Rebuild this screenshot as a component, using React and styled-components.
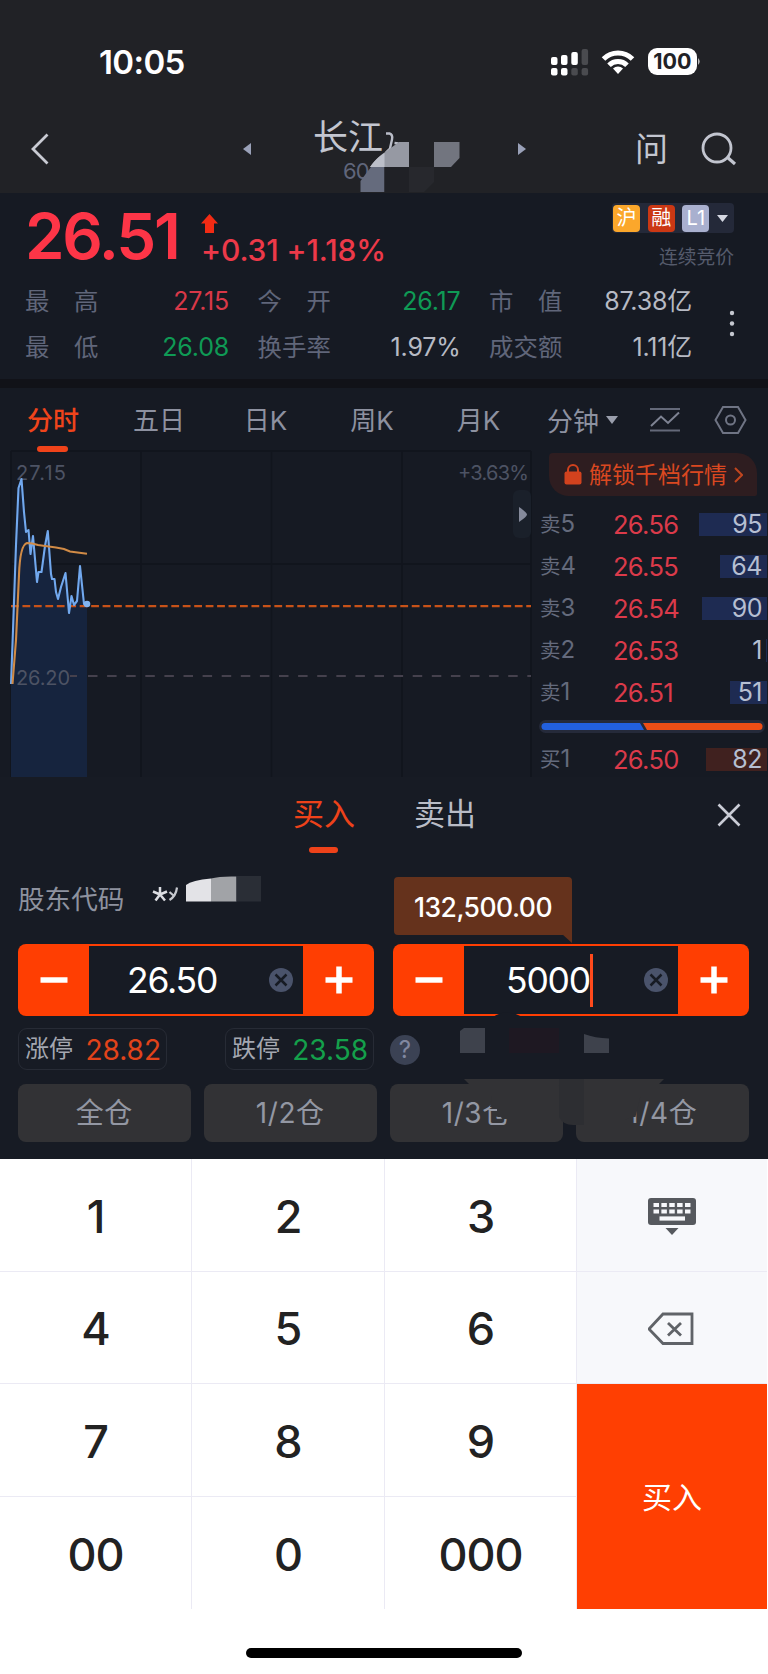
import { useState } from "react";
import styled, { createGlobalStyle } from "styled-components";

const stats = [
  { label: ["最", "高"], value: "27.15", color: "#d93848" },
  { label: ["今", "开"], value: "26.17", color: "#0f9a55" },
  { label: ["市", "值"], value: "87.38亿" },
  { label: ["最", "低"], value: "26.08", color: "#0f9a55" },
  { label: ["换", "手", "率"], value: "1.97%" },
  { label: ["成", "交", "额"], value: "1.11亿" },
];

const asks = [
  { side: "卖", level: 5, price: "26.56", volume: 95, bar: 68 },
  { side: "卖", level: 4, price: "26.55", volume: 64, bar: 47 },
  { side: "卖", level: 3, price: "26.54", volume: 90, bar: 65 },
  { side: "卖", level: 2, price: "26.53", volume: 1, bar: 1 },
  { side: "卖", level: 1, price: "26.51", volume: 51, bar: 37 },
];

const priceLine =
  "11,684 13,630 16,545 18.5,488 21.5,479 24,512 26,532 28.5,530 30.5,554 33,536 37,582 38.5,572 41.5,572 45,546 47.8,531 51,574 52,579 54.5,579 56,592 58,599 61,587 65.5,573 69,613 71.5,596 74,605 77,601 80,566 84,604 87,604";

const keys = ["1", "2", "3", "4", "5", "6", "7", "8", "9", "00", "0", "000"];

const StatusIcons = () => (
  <svg width="152" height="30" viewBox="550 47 152 30">
    <g fill="#fff">
      <rect x="551" y="57" width="6.5" height="8" rx="2" />
      <rect x="561" y="55" width="6.5" height="10" rx="2" />
      <rect x="571.3" y="52" width="6.5" height="13" rx="2" />
      <rect x="551" y="68" width="6.5" height="7.5" rx="2" />
      <rect x="561" y="68" width="6.5" height="7.5" rx="2" />
    </g>
    <g fill="#4a4b4f">
      <rect x="581.6" y="49" width="6.5" height="16" rx="2" />
      <rect x="571.3" y="68" width="6.5" height="7.5" rx="2" />
      <rect x="581.6" y="68" width="6.5" height="7.5" rx="2" />
    </g>
    <g fill="none" stroke="#fff" strokeWidth="5">
      <path d="M603.5 59a20.5 20.5 0 0 1 29 0" />
      <path d="M609 65.3a12.8 12.8 0 0 1 18 0" />
    </g>
    <path d="M618 74l-5-5.5a7.2 7.2 0 0 1 10 0z" fill="#fff" />
    <rect x="648" y="48" width="49" height="27" rx="9" fill="#fff" />
    <path d="M698.3 58q2.4 3.5 0 7z" fill="#fff" />
    <text x="672.3" y="69.3" textAnchor="middle" fontFamily="Inter, sans-serif" fontSize="21.5" fontWeight="700" fill="#212226">
      100
    </text>
  </svg>
);

const Chart = () => (
  <ChartSvg width="532" height="331" viewBox="0 446 532 331">
    <path d="M11 451H531M11 564H531M11 451V778M141 451V778M271.5 451V778M402 451V778M531 451V778" stroke="#11151d" strokeWidth="1.5" fill="none" />
    <text x="16" y="479.5" textLength="50">
      27.15
    </text>
    <text x="529" y="479.5" textAnchor="end" textLength="71">
      +3.63%
    </text>
    <polygon points={`${priceLine} 87,778 11,778`} fill="#16243e" />
    <text x="16" y="684.5" textLength="54">
      26.20
    </text>
    <path d="M70 676h7M88 676H531" stroke="#45414d" strokeWidth="2" strokeDasharray="9.5 9.6" />
    <path d="M11 606.2H531" stroke="#c75218" strokeWidth="2.3" strokeDasharray="7.8 3.65" />
    <polyline points={priceLine} fill="none" stroke="#71a8ee" strokeWidth="2.1" strokeLinejoin="round" />
    <circle cx="87" cy="604" r="3.3" fill="#83b4f1" />
    <path d="M12.5 684L16 640 19 575Q20 545 27 543Q32 543 38 545L56 547.5 64 549 70 551.5 87 553.8" fill="none" stroke="#d18b46" strokeWidth="2.1" />
    <rect x="513" y="490" width="18" height="48" rx="6" fill="#1a202a" />
    <path d="M519 507v15q8-5.5 8-7.5t-8-7.5z" fill="#858a9b" />
  </ChartSvg>
);

const Stepper = ({ value, focused }) => (
  <StepperBox>
    <StepButton>
      <svg width="28" height="28" viewBox="0 0 28 28">
        <path d="M0.5 14H27.5" stroke="#fff" strokeWidth="5.5" />
      </svg>
    </StepButton>
    <StepInput>
      <StepValue $focused={focused}>{value}</StepValue>
      <ClearIcon width="24" height="24" viewBox="0 0 24 24">
        <circle cx="12" cy="12" r="12" fill="#4a536b" />
        <path d="M6.500 6.500l11 11M17.500 6.500l-11 11" stroke="#171b24" strokeWidth="2.5" />
      </ClearIcon>
    </StepInput>
    <StepButton>
      <svg width="28" height="28" viewBox="0 0 28 28">
        <path d="M0.5 14H27.5M14 0.5V27.5" stroke="#fff" strokeWidth="5.5" />
      </svg>
    </StepButton>
  </StepperBox>
);

const BookLine = ({ row, buy }) => (
  <BookRow>
    <Level>
      {row.side}
      <b>{row.level}</b>
    </Level>
    <BookPrice>{row.price}</BookPrice>
    <VolumeCell>
      <VolumeBar $buy={buy} style={{ width: row.bar }} />
      <span>{row.volume}</span>
    </VolumeCell>
  </BookRow>
);

const App = () => {
  const [shares, setShares] = useState("5000");

  return (
    <Page>
      <GlobalStyle />
      <StatusBar>
        <Clock>10:05</Clock>
        <StatusIcons />
      </StatusBar>

      <Header>
        <svg width="20" height="32" viewBox="0 0 20 32">
          <path d="M16.5 1.5L2 16l14.500 14.500" fill="none" stroke="#c9cbd3" strokeWidth="2.8" />
        </svg>
        <svg width="8" height="12" viewBox="0 0 8 12">
          <path d="M8 0v12L0 6z" fill="#9aa1b8" />
        </svg>
        <TitleBlock>
          <Title>长江</Title>
          <Code>60</Code>
          <TitleMask width="154" height="78" viewBox="310 115 154 78">
            <path d="M386 133.5h3.500q3.500 1 2.500 6l-2 9-4 4M394.500 143l4 0.500" stroke="#b9bcc7" strokeWidth="2.4" fill="none" />
            <path d="M399 142H409V167H370Q377 157 388 150Z" fill="#9699a3" />
            <path d="M384.500 153V167H370Q376 158 384.500 153Z" fill="#bcbfc9" />
            <path d="M371 167H384.500V192H360.500V181Z" fill="#656b7d" />
            <path d="M384.500 167H409V192H384.500Z" fill="#202126" />
            <path d="M409 167H434V182L424 192H409Z" fill="#27282d" />
            <path d="M434 142H459.500V158L451 167H434Z" fill="#72757f" />
          </TitleMask>
        </TitleBlock>
        <svg width="8" height="12" viewBox="0 0 8 12">
          <path d="M0 0v12l8-6z" fill="#9aa1b8" />
        </svg>
        <AskLink>问</AskLink>
        <svg width="36" height="34" viewBox="0 0 36 34">
          <circle cx="16" cy="16" r="14" fill="none" stroke="#c2c5cf" strokeWidth="2.8" />
          <path d="M26 25l8 7" stroke="#c2c5cf" strokeWidth="3.2" />
        </svg>
      </Header>

      <Quote>
        <QuoteTop>
          <BigPrice>26.51</BigPrice>
          <Change>
            <svg width="17" height="20" viewBox="0 0 17 20">
              <path d="M8.500 0L17 9.500H13V19H4V9.500H0z" fill="#f22b14" />
            </svg>
            <ChangeText>+0.31 +1.18%</ChangeText>
          </Change>
          <TagColumn>
            <Tags>
              <Tag $bg="#fba72b">沪</Tag>
              <Tag $bg="#cb3814">融</Tag>
              <Tag $bg="#a9b0cf">L1</Tag>
              <svg width="11" height="7" viewBox="0 0 11 7">
                <path d="M0 0h11L5.500 7z" fill="#d5d8e2" />
              </svg>
            </Tags>
            <Phase>连续竞价</Phase>
          </TagColumn>
        </QuoteTop>
        <StatsRow>
          <Stats>
            {stats.map((item) => (
              <Stat key={item.value}>
                <StatLabel>
                  {item.label.map((char) => (
                    <span key={char}>{char}</span>
                  ))}
                </StatLabel>
                <StatValue $color={item.color}>{item.value}</StatValue>
              </Stat>
            ))}
          </Stats>
          <svg width="6" height="28" viewBox="0 0 6 28">
            <g fill="#c5c8d0">
              <circle cx="3" cy="3" r="2.2" />
              <circle cx="3" cy="13.500" r="2.2" />
              <circle cx="3" cy="24" r="2.2" />
            </g>
          </svg>
        </StatsRow>
      </Quote>

      <Tabs>
        <Tab $width={106} $active>
          分时
        </Tab>
        <Tab $width={106}>五日</Tab>
        <Tab $width={107}>日K</Tab>
        <Tab $width={106}>周K</Tab>
        <Tab $width={107}>月K</Tab>
        <MinuteTab>
          分钟
          <svg width="12" height="8" viewBox="0 0 12 8">
            <path d="M0 0h12L6 8z" fill="#9a9eac" />
          </svg>
        </MinuteTab>
        <svg width="32" height="26" viewBox="0 0 32 26">
          <path d="M1 2H31M1 23.500H31" stroke="#646979" strokeWidth="2" />
          <path d="M2 19L12 9.500 19 16 30 5.500" fill="none" stroke="#7e8393" strokeWidth="2" />
        </svg>
        <HexIcon width="33" height="28" viewBox="0 0 33 28">
          <path d="M9 1H24L31.500 14 24 27H9L1.500 14Z" fill="none" stroke="#6f7484" strokeWidth="2" />
          <circle cx="16.500" cy="14" r="4.500" fill="none" stroke="#6f7484" strokeWidth="2" />
        </HexIcon>
      </Tabs>

      <Market>
        <Chart />
        <Book>
          <Unlock>
            <svg width="18" height="21" viewBox="0 0 18 21">
              <path d="M4 8V6a5 5 0 0 1 10 0v2" fill="none" stroke="#d2421e" strokeWidth="2" />
              <rect x="0.5" y="7.5" width="17" height="13" rx="2" fill="#d2421e" />
            </svg>
            <UnlockText>解锁千档行情</UnlockText>
            <svg width="9" height="16" viewBox="0 0 9 16">
              <path d="M1 1l7 7-7 7" fill="none" stroke="#c0461f" strokeWidth="2" />
            </svg>
          </Unlock>
          {asks.map((row) => (
            <BookLine key={row.level} row={row} />
          ))}
          <Ratio width="226" height="13" viewBox="0 0 226 13">
            <rect width="226" height="13" rx="6.500" fill="#252a3a" />
            <path d="M6 3H101L105 10H6A3.500 3.500 0 0 1 6 3Z" fill="#2260df" />
            <path d="M104 3H220A3.500 3.500 0 0 1 220 10H108Z" fill="#ee4e16" />
          </Ratio>
          <BookLine row={{ side: "买", level: 1, price: "26.50", volume: 82, bar: 61 }} buy />
        </Book>
      </Market>

      <Sheet>
        <SheetTabs>
          <SheetTab $active>买入</SheetTab>
          <SheetTab>卖出</SheetTab>
          <CloseIcon width="24" height="24" viewBox="0 0 24 24">
            <path d="M1.500 1.500l21 21M22.500 1.500l-21 21" stroke="#c9ccd5" strokeWidth="2.6" />
          </CloseIcon>
        </SheetTabs>
        <AccountRow>
          <span>股东代码</span>
          <AccountMask width="110" height="40" viewBox="152 872 110 40">
            <path d="M160 894.500V887M160 894.500L153 891.500M160 894.500L167 891.500M160 894.500L155.500 900.500M160 894.500L165 900.500" stroke="#dcdde2" strokeWidth="2.5" fill="none" />
            <path d="M169.500 892l4 3.500M177 887.500q-1 8.500-7.500 12.500" stroke="#c6c8ce" strokeWidth="2.2" fill="none" />
            <path d="M186 901.500V885Q192 880 211 878.500V901.500Z" fill="#e3e3e7" />
            <path d="M211 901.500V878.500Q220 876 236.500 876.500V901.500Z" fill="#a1a3a7" />
            <rect x="236.500" y="876" width="24.500" height="25.500" fill="#2a2e36" />
          </AccountMask>
          <Amount>
            132,500.00
            <AmountTail width="10" height="9" viewBox="0 0 10 9">
              <path d="M0 0H10V9Z" fill="#65321c" />
            </AmountTail>
          </Amount>
        </AccountRow>
        <Steppers>
          <Stepper value="26.50" />
          <Stepper value={shares} focused />
        </Steppers>
        <Limits>
          <Limit $color="#e2431a">
            涨停 <b>28.82</b>
          </Limit>
          <Limit $color="#14a04b">
            跌停 <b>23.58</b>
          </Limit>
          <Help>?</Help>
        </Limits>
        <Portions>
          <Portion>全仓</Portion>
          <Portion>1/2仓</Portion>
          <Portion>1/3仓</Portion>
          <Portion>1/4仓</Portion>
        </Portions>
        <SheetMask width="270" height="140" viewBox="450 1012 270 140">
          <path d="M492 1018Q505 1007 524 1018Z" fill="#171b24" />
          <path d="M460 1031L464 1028H485V1053H460Z" fill="#3e424c" />
          <rect x="509" y="1028" width="50" height="25" fill="#1e1822" />
          <path d="M584 1034Q595 1038 609 1038.500V1053H584Z" fill="#3e424c" />
          <path d="M464 1079H664L658 1085H470Z" fill="#323235" />
          <path d="M559 1079H584V1125H573Q563 1125 559 1117Z" fill="#2d2e32" />
          <path d="M492 1096H516V1119H503L497 1114V1107H490Z" fill="#323235" />
          <path d="M625 1096H640.500L635.500 1117 631 1117 625 1120Z" fill="#323235" />
        </SheetMask>
      </Sheet>

      <Keypad>
        <Digits>
          {keys.map((key) => (
            <Key key={key} onClick={() => setShares(shares + key)}>
              {key}
            </Key>
          ))}
        </Digits>
        <Actions>
          <ActionKey>
            <svg width="48" height="38" viewBox="0 0 48 38">
              <rect width="48" height="27" rx="3" fill="#56595e" />
              <path d="M5.500 7H42.500M5.500 13.500H42.500" stroke="#f7f8fb" strokeWidth="4.2" strokeDasharray="5.5 2.37" />
              <path d="M11.500 20.500H37" stroke="#f7f8fb" strokeWidth="4.2" />
              <path d="M17.500 30H30.500L24 37Z" fill="#56595e" />
            </svg>
          </ActionKey>
          <ActionKey onClick={() => setShares(shares.slice(0, -1))}>
            <svg width="48" height="34" viewBox="0 0 48 34">
              <path d="M1 17L15 2H44V31.500H15Z" fill="none" stroke="#606368" strokeWidth="2.8" />
              <path d="M20 11L33 23.500M33 11L20 23.500" stroke="#606368" strokeWidth="2.8" />
            </svg>
          </ActionKey>
          <BuyKey>买入</BuyKey>
        </Actions>
      </Keypad>
      <HomeArea>
        <HomeBar />
      </HomeArea>
    </Page>
  );
};

const GlobalStyle = createGlobalStyle`
  body {
    margin: 0;
    background-color: #fff;
  }

  * {
    box-sizing: border-box;
  }

  svg {
    display: block;
    flex-shrink: 0;
  }

  button {
    border: none;
    padding: 0;
    font: inherit;
    color: inherit;
    background: none;
  }
`;

const Page = styled.div`
  width: 768px;
  height: 1674px;
  overflow: hidden;
  background-color: #161a23;
  color: #c3c6d0;
  font-family: Inter, "Noto Sans CJK SC", sans-serif;
`;

const StatusBar = styled.div`
  height: 104px;
  padding: 20px 66px 0 99px;
  display: flex;
  justify-content: space-between;
  align-items: center;
  background-color: #212226;
`;

const Clock = styled.div`
  color: #fff;
  font-size: 33px;
  font-weight: 600;
  letter-spacing: -0.6px;
`;

const Header = styled.div`
  height: 89px;
  display: grid;
  grid-template-columns: 212px 67px 208px 117px 66px 36px;
  align-items: center;
  padding: 0 0 0 31px;
  background-color: #212226;
`;

const TitleBlock = styled.div`
  position: relative;
  height: 89px;
  display: flex;
  flex-direction: column;
`;

const Title = styled.div`
  padding: 10px 0 0 3px;
  font-size: 35px;
  line-height: 46px;
`;

const Code = styled.div`
  padding-left: 33px;
  font-size: 22px;
  line-height: 22px;
  letter-spacing: -0.8px;
  color: #60667b;
`;

const TitleMask = styled.svg`
  position: absolute;
  left: 0;
  top: 11px;
`;

const AskLink = styled.a`
  font-size: 33px;
  line-height: 40px;
  padding-top: 1px;
`;

const Quote = styled.div`
  height: 195px;
  border-bottom: 9px solid #111218;
`;

const QuoteTop = styled.div`
  height: 85px;
  display: flex;
  padding-left: 25px;
`;

const BigPrice = styled.div`
  width: 176px;
  font-size: 63.5px;
  font-weight: 600;
  line-height: 86px;
  letter-spacing: -2.2px;
  color: #fd3547;
`;

const Change = styled.div`
  width: 411px;
  padding-top: 21px;
`;

const ChangeText = styled.div`
  font-size: 30px;
  font-weight: 500;
  line-height: 32px;
  letter-spacing: -0.1px;
  color: #ed3949;
  white-space: nowrap;
`;

const TagColumn = styled.div`
  width: 122px;
  padding-top: 10px;
`;

const Tags = styled.div`
  height: 30px;
  padding: 0 6px 0 1px;
  display: flex;
  align-items: center;
  justify-content: space-between;
  border-radius: 4px;
  background-color: #242939;
`;

const Tag = styled.span`
  width: 27px;
  height: 27px;
  border-radius: 4px;
  background-color: ${(props) => props.$bg};
  color: #fff;
  font-size: 20px;
  line-height: 26px;
  text-align: center;
`;

const Phase = styled.div`
  padding-top: 11px;
  font-size: 18.8px;
  line-height: 27px;
  text-align: right;
  color: #555b6c;
`;

const StatsRow = styled.div`
  display: flex;
  align-items: center;
  padding-left: 25px;
`;

const Stats = styled.div`
  width: 704px;
  display: grid;
  grid-template-columns: 204px 203px 203px;
  column-gap: 28.5px;
`;

const Stat = styled.div`
  height: 46px;
  display: flex;
  align-items: center;
  justify-content: space-between;
`;

const StatLabel = styled.div`
  width: 73.5px;
  display: flex;
  justify-content: space-between;
  padding-bottom: 3px;
  font-size: 24.4px;
  color: #60667a;
`;

const StatValue = styled.div`
  font-size: 25px;
  line-height: 46px;
  letter-spacing: -0.2px;
  color: ${(props) => props.$color || "#b7bac4"};
`;

const Tabs = styled.div`
  height: 64px;
  display: flex;
  align-items: center;
  padding-bottom: 1px;
`;

const Tab = styled.div`
  position: relative;
  width: ${(props) => props.$width}px;
  padding-top: 2px;
  font-size: 26px;
  line-height: 60px;
  text-align: center;
  color: ${(props) => (props.$active ? "#f0441b" : "#8d91a0")};
  font-weight: ${(props) => (props.$active ? 500 : 400)};

  &::after {
    content: "";
    display: ${(props) => (props.$active ? "block" : "none")};
    position: absolute;
    left: 37px;
    bottom: -1px;
    width: 31px;
    height: 6px;
    border-radius: 3px;
    background-color: #f0431a;
  }
`;

const MinuteTab = styled.div`
  width: 117px;
  padding-left: 15px;
  display: flex;
  align-items: center;
  gap: 7px;
  font-size: 26px;
  color: #8d91a0;
`;

const HexIcon = styled.svg`
  margin-left: 33px;
`;

const Market = styled.div`
  height: 325px;
  display: flex;
`;

const ChartSvg = styled.svg`
  margin-top: -6px;
  font-family: Inter, sans-serif;
  font-size: 20px;

  text {
    fill: #4d5364;
  }
`;

const Book = styled.div`
  width: 236px;
  padding-left: 8px;
`;

const Unlock = styled.div`
  width: 208px;
  height: 43px;
  margin: 1px 0 7px 9px;
  padding: 0 14px 0 15px;
  display: flex;
  align-items: center;
  justify-content: space-between;
  border-radius: 4px 20px 2px 20px;
  background-color: #2e1d20;
`;

const UnlockText = styled.span`
  padding-bottom: 3px;
  font-size: 23px;
  color: #da4820;
`;

const BookRow = styled.div`
  height: 42.2px;
  display: grid;
  grid-template-columns: 73px 86px 69px;
  align-items: center;
`;

const Level = styled.div`
  font-size: 20.5px;
  line-height: 40px;
  color: #646a7c;
  white-space: nowrap;

  b {
    font-size: 24px;
    font-weight: 400;
  }
`;

const BookPrice = styled.div`
  font-size: 25.5px;
  letter-spacing: -0.7px;
  color: #db3a4a;
`;

const VolumeCell = styled.div`
  position: relative;
  height: 23px;
  padding-right: 6px;
  text-align: right;
  font-size: 25px;
  line-height: 23px;
  letter-spacing: -0.5px;
  color: #b6bfd2;

  span {
    position: relative;
  }
`;

const VolumeBar = styled.div`
  position: absolute;
  right: 1px;
  top: 0;
  height: 23px;
  background-color: ${(props) => (props.$buy ? "#40211f" : "#1e2b52")};
`;

const Ratio = styled.svg`
  margin: 6px 0 5px -1px;
`;

const Sheet = styled.div`
  position: relative;
  height: 382px;
  padding: 0 18px;
  background-color: #171b24;
`;

const SheetTabs = styled.div`
  height: 91px;
  padding: 0 9px 0 275px;
  display: flex;
`;

const SheetTab = styled.div`
  position: relative;
  width: 121px;
  font-size: 31px;
  line-height: 74px;
  color: ${(props) => (props.$active ? "#ee421a" : "#b9bcc6")};

  &::after {
    content: "";
    display: ${(props) => (props.$active ? "block" : "none")};
    position: absolute;
    left: 16px;
    top: 70px;
    width: 29px;
    height: 6px;
    border-radius: 3px;
    background-color: #ee421a;
  }
`;

const CloseIcon = styled.svg`
  margin: 26px 0 0 auto;
`;

const AccountRow = styled.div`
  height: 76px;
  display: flex;
  font-size: 26.6px;
  line-height: 62px;
  color: #8e929f;
`;

const AccountMask = styled.svg`
  margin: 4px 0 0 28px;
`;

const Amount = styled.div`
  position: relative;
  width: 178px;
  height: 58px;
  margin: 9px 178px 0 auto;
  border-radius: 4px 4px 0 4px;
  background-color: #65321c;
  color: #fff;
  font-size: 26.5px;
  font-weight: 500;
  line-height: 60px;
  letter-spacing: -0.5px;
  text-align: center;
`;

const AmountTail = styled.svg`
  position: absolute;
  right: 0;
  top: 57px;
`;

const Steppers = styled.div`
  display: grid;
  grid-template-columns: 356px 356px;
  column-gap: 19px;
`;

const StepperBox = styled.div`
  height: 72px;
  padding: 2px 0;
  display: flex;
  border-radius: 8px;
  background-color: #ff3e02;
`;

const StepButton = styled.button`
  width: 71px;
  display: flex;
  align-items: center;
  justify-content: center;
`;

const StepInput = styled.div`
  position: relative;
  flex: 1;
  display: flex;
  align-items: center;
  background-color: #171b24;
`;

const StepValue = styled.div`
  height: 53px;
  margin-left: ${(props) => (props.$focused ? 42 : 38)}px;
  border-right: ${(props) => (props.$focused ? "3px solid #ff4a1c" : "none")};
  color: #fff;
  font-size: 35.5px;
  line-height: 53px;
  letter-spacing: -1.2px;
`;

const ClearIcon = styled.svg`
  position: absolute;
  right: 10px;
`;

const Limits = styled.div`
  height: 68px;
  padding-top: 12px;
  display: flex;
  align-items: flex-start;
`;

const Limit = styled.div`
  width: 149px;
  height: 42px;
  padding: 0 5px 0 6px;
  margin-right: 58px;
  display: flex;
  align-items: center;
  justify-content: space-between;
  border: 1.5px solid #272b35;
  border-radius: 9px;
  font-size: 24px;
  line-height: 38px;
  color: #a4a7b0;
  white-space: nowrap;

  & + & {
    margin-right: 16px;
  }

  b {
    padding-top: 2px;
    font-size: 28px;
    font-weight: 400;
    color: ${(props) => props.$color};
  }
`;

const Help = styled.div`
  width: 30px;
  height: 30px;
  margin-top: 7px;
  border-radius: 50%;
  background-color: #3b4254;
  color: #8188a0;
  font-size: 24px;
  line-height: 30px;
  text-align: center;
`;

const Portions = styled.div`
  display: grid;
  grid-template-columns: repeat(4, 172.5px);
  column-gap: 13.5px;
`;

const Portion = styled.button`
  height: 58px;
  border-radius: 8px;
  background-color: #323235;
  color: #9397a3;
  font-size: 28px;
  line-height: 58px;
  letter-spacing: 0.6px;
`;

const SheetMask = styled.svg`
  position: absolute;
  left: 450px;
  top: 235px;
`;

const Keypad = styled.div`
  height: 450px;
  display: flex;
  background-color: #fff;
`;

const Digits = styled.div`
  width: 577px;
  display: grid;
  grid-template-columns: 192px 193px 192px;
  grid-template-rows: repeat(4, 112.5px);
`;

const Key = styled.button`
  padding-top: 3px;
  border-right: 1.5px solid #ebeaf4;
  border-bottom: 1.5px solid #ebeaf4;
  color: #222;
  font-size: 45px;
  font-weight: 500;
  letter-spacing: -1px;

  &:nth-child(n + 10) {
    border-bottom: none;
  }
`;

const Actions = styled.div`
  width: 190px;
  display: grid;
  grid-template-rows: 112.5px 112.5px 225px;
`;

const ActionKey = styled.button`
  display: flex;
  align-items: center;
  justify-content: center;
  padding-top: 4px;
  border-bottom: 1.5px solid #ebeaf4;
  background-color: #f7f8fb;
`;

const BuyKey = styled.button`
  padding-bottom: 4px;
  background-color: #ff3f02;
  color: #fff;
  font-size: 30px;
`;

const HomeArea = styled.div`
  height: 65px;
  padding-top: 39px;
  background-color: #fff;
`;

const HomeBar = styled.div`
  width: 276px;
  height: 10px;
  margin: 0 auto;
  border-radius: 5px;
  background-color: #000;
`;

export default App;
